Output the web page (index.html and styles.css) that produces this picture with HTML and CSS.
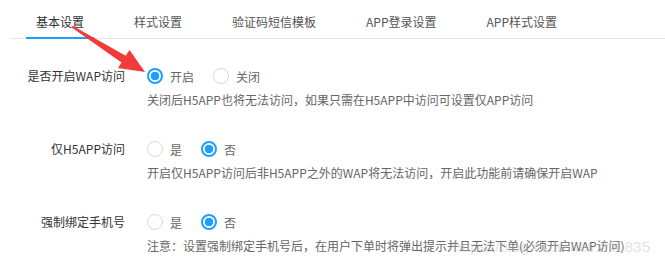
FILE: index.html
```html
<!DOCTYPE html>
<html lang="zh-CN">
<head>
    <meta charset="UTF-8">
    <meta name="viewport" content="width=device-width, initial-scale=1.0">
    <title>基本设置</title>
    <link rel="stylesheet" href="styles.css">
</head>
<body>

<div class="page">
    <ul class="tabs">
        <li class="tab active">基本设置</li>
        <li class="tab">样式设置</li>
        <li class="tab">验证码短信模板</li>
        <li class="tab">APP登录设置</li>
        <li class="tab">APP样式设置</li>
    </ul>

    <div class="form">
        <div class="form-item">
            <div class="label">是否开启WAP访问</div>
            <div class="options">
                <span class="option"><i class="radio checked"></i>开启</span>
                <span class="option"><i class="radio"></i>关闭</span>
            </div>
            <div class="help">关闭后H5APP也将无法访问，如果只需在H5APP中访问可设置仅APP访问</div>
        </div>

        <div class="form-item">
            <div class="label">仅H5APP访问</div>
            <div class="options">
                <span class="option"><i class="radio"></i>是</span>
                <span class="option"><i class="radio checked"></i>否</span>
            </div>
            <div class="help">开启仅H5APP访问后非H5APP之外的WAP将无法访问，开启此功能前请确保开启WAP</div>
        </div>

        <div class="form-item">
            <div class="label">强制绑定手机号</div>
            <div class="options">
                <span class="option"><i class="radio"></i>是</span>
                <span class="option"><i class="radio checked"></i>否</span>
            </div>
            <div class="help">注意：设置强制绑定手机号后，在用户下单时将弹出提示并且无法下单(必须开启WAP访问)</div>
        </div>
    </div>

    <!-- annotation arrow drawn over the screenshot -->
    <svg class="arrow" width="665" height="267" viewBox="0 0 665 267">
        <polygon points="71,27 73,26 125.7,55.7 129.5,50 145,72 118,68 121.5,62.5" fill="#f23a3a"/>
    </svg>

    <span class="watermark">https://blog.csdn.net/zhi0835</span>
</div>

</body>
</html>
```

FILE: styles.css
```css
body {
    margin: 0;
    background: #fff;
    font-family: "Noto Sans CJK SC", "Noto Sans", sans-serif;
    font-size: 12px;
    color: #333;
}
.page {
    position: relative;
    width: 665px;
    height: 267px;
    overflow: hidden;
}
.tabs {
    display: flex;
    gap: 30px;
    list-style: none;
    margin: 0 0 0 11px;
    padding: 0 0 0 15px;
    height: 38px;
    border-bottom: 1px solid #e6e6e6;
}
.tab {
    padding: 0 10px;
    height: 37px;
    line-height: 43px;
    color: #555;
    font-size: 12px;
}
.tab.active {
    color: #333;
    height: 37px;
    border-bottom: 2px solid #1e9fff;
}
.form {
    padding-top: 25px;
}
.form-item {
    display: grid;
    grid-template-columns: 125px 1fr;
    column-gap: 22px;
    margin-bottom: 27px;
}
.label {
    text-align: right;
    line-height: 24px;
    color: #333;
}
.options {
    display: flex;
    gap: 19px;
    height: 24px;
    align-items: center;
}
.option {
    display: flex;
    align-items: center;
    gap: 7px;
    color: #666;
}
.radio {
    box-sizing: border-box;
    width: 16px;
    height: 16px;
    border: 1px solid #d9d9d9;
    border-radius: 50%;
    background: #fff;
}
.radio.checked {
    border: 2px solid #1e9fff;
    background: radial-gradient(circle, #1e9fff 0 4px, #fff 4.6px);
}
.help {
    grid-column: 2;
    margin-top: 2px;
    line-height: 20px;
    color: #666;
    white-space: nowrap;
}
.arrow {
    position: absolute;
    left: 0;
    top: 0;
    pointer-events: none;
}
.watermark {
    position: absolute;
    left: 453px;
    top: 238px;
    font-family: "Liberation Sans", sans-serif;
    font-size: 15.5px;
    color: rgba(190, 190, 190, 0.45);
    white-space: nowrap;
}
```
